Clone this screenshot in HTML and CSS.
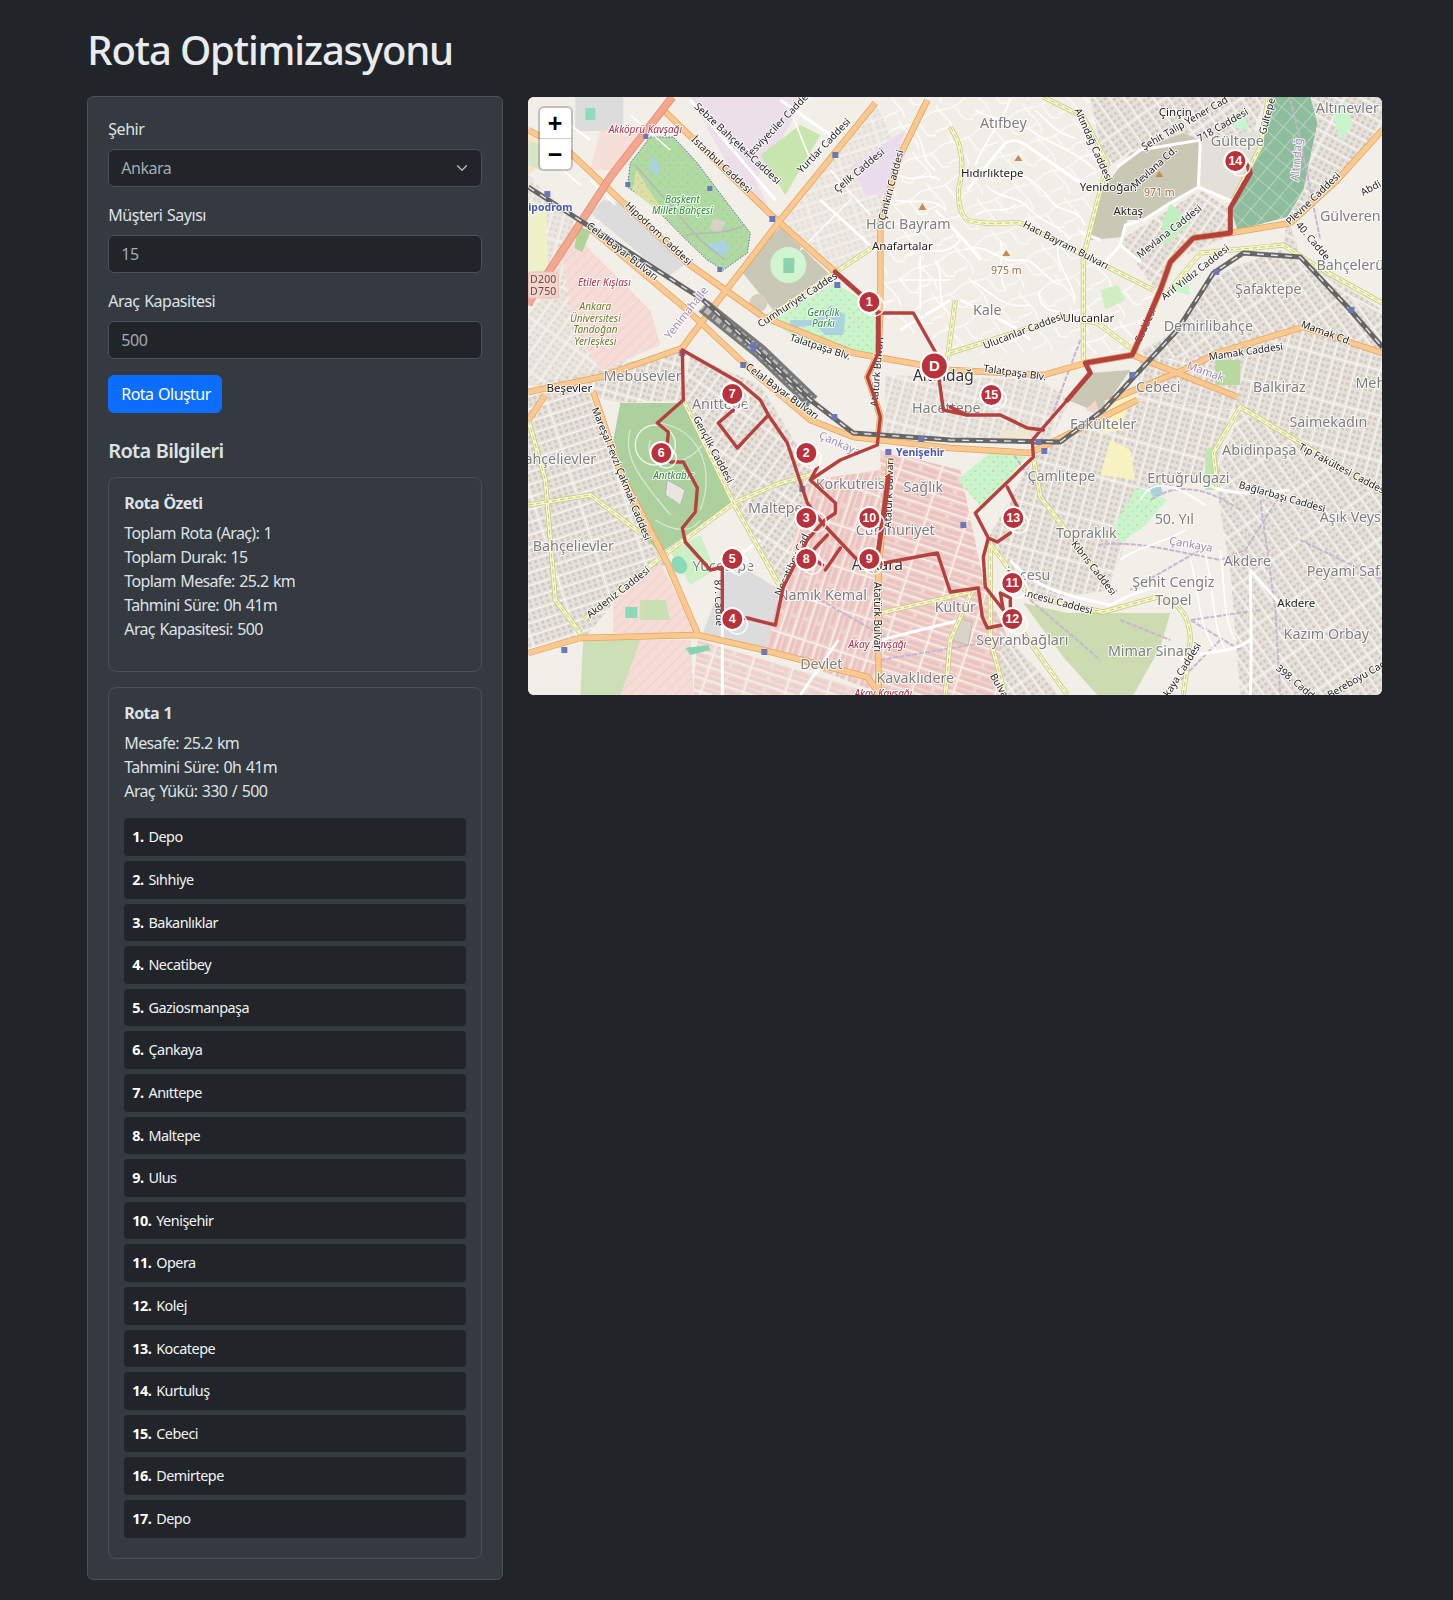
FILE: index.html
```html
<!DOCTYPE html>
<html lang="tr">
<head>
<meta charset="utf-8">
<title>Rota Optimizasyonu</title>
<link rel="stylesheet" href="styles.css">
</head>
<body>
<div class="page">
  <h1 class="title">Rota Optimizasyonu</h1>
  <div class="columns">
    <aside class="panel">
      <div class="field">
        <label class="field-label">Şehir</label>
        <div class="select-wrap">
          <select class="control"><option>Ankara</option></select>
          <svg class="chevron" viewBox="0 0 16 16"><path d="M2 5l6 6 6-6" fill="none" stroke="#adb5bd" stroke-width="2" stroke-linecap="round" stroke-linejoin="round"/></svg>
        </div>
      </div>
      <div class="field">
        <label class="field-label">Müşteri Sayısı</label>
        <input class="control" value="15">
      </div>
      <div class="field">
        <label class="field-label">Araç Kapasitesi</label>
        <input class="control" value="500">
      </div>
      <button class="btn">Rota Oluştur</button>
      <h4 class="section-title">Rota Bilgileri</h4>
      <section class="info-card">
        <h6 class="info-title">Rota Özeti</h6>
        <p class="info-lines">Toplam Rota (Araç): 1<br>Toplam Durak: 15<br>Toplam Mesafe: 25.2 km<br>Tahmini Süre: 0h 41m<br>Araç Kapasitesi: 500</p>
      </section>
      <section class="info-card">
        <h6 class="info-title">Rota 1</h6>
        <p class="info-lines">Mesafe: 25.2 km<br>Tahmini Süre: 0h 41m<br>Araç Yükü: 330 / 500</p>
        <ul class="stops">
          <li class="stop"><b>1.</b> Depo</li>
          <li class="stop"><b>2.</b> Sıhhiye</li>
          <li class="stop"><b>3.</b> Bakanlıklar</li>
          <li class="stop"><b>4.</b> Necatibey</li>
          <li class="stop"><b>5.</b> Gaziosmanpaşa</li>
          <li class="stop"><b>6.</b> Çankaya</li>
          <li class="stop"><b>7.</b> Anıttepe</li>
          <li class="stop"><b>8.</b> Maltepe</li>
          <li class="stop"><b>9.</b> Ulus</li>
          <li class="stop"><b>10.</b> Yenişehir</li>
          <li class="stop"><b>11.</b> Opera</li>
          <li class="stop"><b>12.</b> Kolej</li>
          <li class="stop"><b>13.</b> Kocatepe</li>
          <li class="stop"><b>14.</b> Kurtuluş</li>
          <li class="stop"><b>15.</b> Cebeci</li>
          <li class="stop"><b>16.</b> Demirtepe</li>
          <li class="stop"><b>17.</b> Depo</li>
        </ul>
      </section>
    </aside>
    <div class="map">
      <svg class="map-svg" viewBox="527.67 97 854.33 598" xmlns="http://www.w3.org/2000/svg">
        <defs>
          <pattern id="cityA" width="12" height="44" patternUnits="userSpaceOnUse" patternTransform="rotate(72)">
            <rect width="12" height="44" fill="#e6e1da"/>
            <path d="M2 3h3v3h-3zM7 3h3v3h-3zM2 9h3v3h-3zM7 9h3v3h-3zM2 15h3v3h-3zM7 15h3v3h-3zM2 21h3v3h-3zM7 21h3v3h-3zM2 27h3v3h-3zM7 27h3v3h-3zM2 33h3v3h-3zM7 33h3v3h-3zM2 39h3v3h-3zM7 39h3v3h-3z" fill="#d2cbc2"/>
            <path d="M0 0V44M0 0H12" stroke="#fff" stroke-width="1.6"/>
          </pattern>
          <pattern id="cityB" href="#cityA" patternTransform="rotate(35)"/>
          <pattern id="cityC" href="#cityA" patternTransform="rotate(-35)"/>
          <pattern id="cityD" href="#cityA" patternTransform="rotate(15)"/>
          <pattern id="cityE" href="#cityA" patternTransform="rotate(-62)"/>
          <pattern id="pinkA" width="13" height="40" patternUnits="userSpaceOnUse" patternTransform="rotate(18)">
            <rect width="13" height="40" fill="#efd6d0"/>
            <path d="M2 2h3v36h-3zM7 2h4v16h-4zM7 22h4v16h-4z" fill="#ecc4bf"/>
            <path d="M0 0V40M0 0H13" stroke="#fdf9f4" stroke-width="1.8"/>
          </pattern>
          <pattern id="pinkB" href="#pinkA" patternTransform="rotate(-72)"/>
          <pattern id="lightStreets" width="40" height="34" patternUnits="userSpaceOnUse" patternTransform="rotate(-24)">
            <rect width="40" height="34" fill="#f1eee7"/>
            <path d="M0 6C8 2 22 14 40 6M12 0C10 10 22 20 18 34M28 10C34 18 26 26 40 28M0 26C6 22 10 28 16 24" stroke="#fff" stroke-width="1.3" fill="none"/>
          </pattern>
          <pattern id="parkGrid" width="14" height="14" patternUnits="userSpaceOnUse" patternTransform="rotate(40)">
            <rect width="14" height="14" fill="#8dbd9d"/>
            <path d="M0 0V14M0 0H14" stroke="#d5e8da" stroke-width="1.1"/>
          </pattern>
          <pattern id="milHatch" width="8" height="8" patternUnits="userSpaceOnUse" patternTransform="rotate(-45)">
            <rect width="8" height="8" fill="#f6dcd6"/>
            <path d="M0 0H8" stroke="#efc4bb" stroke-width="1"/>
          </pattern>
          <pattern id="treeDots" width="9" height="9" patternUnits="userSpaceOnUse">
            <circle cx="3" cy="3" r=".7" fill="#e8948a"/>
            <circle cx="7.5" cy="7" r=".6" fill="#e8948a"/>
          </pattern>

          <g id="roadsOrange">
            <path d="M660 107L773 217L835 272"/>
            <path d="M875 103L780 220L690 337L682 348L600 377L528 392"/>
            <path d="M528 130L570 153L687 263L763 317L853 353L950 370L1043 375L1085 363"/>
            <path d="M588 227L687 310L753 372L810 420L853 437L950 448L1030 453L1137 400"/>
            <path d="M1085 363L1132 355L1237 397"/>
            <path d="M1110 400L1183 370L1217 353L1303 327L1382 353"/>
            <path d="M1193 238L1230 233L1290 223L1337 180L1382 130"/>
            <path d="M528 653L580 638L697 635L763 650L867 677L880 695"/>
            <path d="M593 392L620 473L667 563L697 633"/>
            <path d="M890 457L878 567L878 695"/>
            <path d="M927 100L900 155L880 223L880 313L878 353L867 377L875 400L880 417L877 443"/>
            <path d="M1132 355L1160 290L1170 262L1193 238"/>
            <path d="M528 420L545 395"/>
          </g>
          <g id="roadsYellow">
            <path d="M583 620L657 560L733 503L780 483L810 475"/>
            <path d="M763 320L873 247"/>
            <path d="M683 400L733 503L780 587"/>
            <path d="M950 127C962 145 965 165 958 190C958 205 960 215 967 220C985 226 1005 222 1020 223L1153 290"/>
            <path d="M1043 97L1083 117L1107 163L1083 257L1083 360"/>
            <path d="M950 353L1063 317L1097 323L1133 350"/>
            <path d="M1167 293L1200 253L1283 245L1317 267L1382 303"/>
            <path d="M1268 97L1260 147L1233 200"/>
            <path d="M1033 457L1040 497L1083 553L1110 590"/>
            <path d="M987 540L1030 597L1103 612L1157 597C1180 600 1190 620 1190 640L1183 695"/>
            <path d="M1217 487L1213 453L1240 407L1300 443L1382 493"/>
            <path d="M1023 633L1067 695"/>
            <path d="M990 540L990 640L1005 695"/>
            <path d="M528 505L590 495L640 533"/>
            <path d="M880 613L945 598L975 590"/>
            <path d="M528 420L545 480L555 600L585 640"/>
            <path d="M947 360L955 300"/>
            <path d="M945 695L950 640L972 590"/>
          </g>
          <g id="streetsWhite">
            <path d="M1117 167L1140 150L1200 140L1198 187L1233 202"/>
            <path d="M1198 187L1170 203L1143 220L1125 225L1120 245L1140 262"/>
            <path d="M967 190L1003 145C1010 138 1020 140 1030 148L1090 190"/>
            <path d="M1100 240L1080 232M1120 245L1105 262"/>
            <path d="M1250 695C1252 640 1250 600 1250 570L1285 610"/>
            <path d="M1010 560C1030 585 1060 595 1110 605L1130 595L1160 585"/>
            <path d="M722 567L760 540M722 620V695"/>
            <path d="M900 330C915 320 935 310 950 300M935 210C950 225 965 240 980 260"/>
            <path d="M960 300C990 315 1015 325 1030 340"/>
            <path d="M1200 480C1220 495 1250 495 1290 490"/>
            <path d="M820 200L875 250M780 100L830 135M690 100L775 200"/>
            <path d="M880 640L960 620M838 640L800 695M1180 660C1200 650 1230 655 1250 640"/>
          </g>
          <g id="streetsThin">
            <path d="M1010 100C1000 125 985 140 975 165M975 110C990 120 1010 118 1030 130C1050 145 1075 150 1095 170"/>
            <path d="M1035 110C1050 125 1060 135 1075 138M1000 175C1020 170 1035 180 1050 200C1060 215 1075 205 1085 225"/>
            <path d="M985 185C1000 200 1020 195 1030 210C1045 225 1060 225 1070 240M975 215C990 205 1005 215 1015 205"/>
            <path d="M965 250C985 240 1000 265 1020 260C1035 258 1045 280 1060 285M970 280C990 290 1000 310 1030 305"/>
            <path d="M1060 240C1050 260 1070 275 1075 300M1040 290C1035 305 1050 312 1060 312M1000 240C1005 255 995 270 1005 290"/>
            <path d="M905 255C925 245 945 260 960 240M900 280H950M920 255V310M935 260C945 275 935 295 945 310"/>
            <path d="M900 175C915 185 925 170 940 180M895 200C915 205 930 195 945 210M915 130C925 145 920 160 935 170"/>
            <path d="M1190 560C1200 590 1195 620 1215 650M1205 555C1215 590 1210 620 1225 650M1220 550C1225 585 1222 620 1235 640"/>
            <path d="M1140 500C1155 470 1190 495 1205 505M1120 560C1140 545 1160 545 1185 530"/>
            <path d="M630 115L670 150M550 110L590 140M540 150L580 185M590 180L615 205"/>
            <path d="M790 110L810 160M830 170L870 215M850 200L800 250"/>
          </g>
          <g id="rail">
            <path d="M528 187L703 300L810 400L853 433L950 440L1060 442L1103 410L1177 330L1213 273L1243 253L1300 257L1350 310L1382 347"/>
          </g>
          <path id="yard" d="M703 306L760 352L812 402"/>
          <path id="routePath" d="M878 313H913L935 352M878 353L867 377L875 400L880 417L877 445L840 460L810 480L835 503V513L822 522M810 480L817 467M682 350L740 383L731 395M740 383L760 400L768 415L737 448L718 423L733 410M768 415L787 443L807 503L822 523L855 558L869 559M682 350L683 400L657 423L668 432L667 443M670 462H683L697 488L695 512L682 528L685 542L710 570L722 567V613M732 619L747 618L775 625L783 587L807 540L822 523M813 550L827 535M825 570L840 548M812 558L822 565M873 565L937 553L950 592L978 588L982 617L987 628L1002 625M1000 593L1010 598V607M1000 593L1003 610L985 587L983 557L988 538L975 513L1033 457L1032 440L1067 400M988 538L997 542L1010 533M1007 487L1017 507M935 352L943 410L967 415H1000L1027 428L1043 430M950 407L967 415"/>
          <path id="routeThick" d="M835 272L869 302L878 313V353M1067 400L1090 373L1085 363L1132 355L1160 290L1170 262L1193 238L1230 233V208L1250 173L1248 166M888 477L883 517L877 557"/>
        </defs>

        <g class="map-base">
          <rect x="527" y="96" width="856" height="600" fill="#f2efe9"/>
          <!-- urban texture -->
          <path fill="url(#cityA)" d="M528 395L590 390L620 470L665 565L613 603L583 640L528 655Z"/>
          <path fill="url(#cityD)" d="M528 385L682 350L683 400L620 403L590 395Z"/>
          <path fill="url(#cityB)" d="M690 355L760 385L830 500L780 585L733 503L683 400Z"/>
          <path fill="url(#pinkA)" d="M780 587L810 480L880 470L880 693L765 650Z"/>
          <path fill="url(#pinkB)" d="M880 450L960 470L985 590L1000 620L1030 695L880 695Z"/>
          <path fill="url(#cityD)" d="M1033 457L1130 400L1230 410L1217 480L1140 490L1110 590L1040 600L987 540Z"/>
          <path fill="url(#cityC)" d="M1240 410L1382 490V695H1240L1230 570L1215 480Z"/>
          <path fill="url(#cityC)" d="M1133 355L1177 330L1213 275L1280 250L1382 320V350L1300 330L1217 355L1180 370Z"/>
          <path fill="url(#cityD)" d="M1140 360L1217 355L1300 330L1382 355V490L1240 410L1137 400Z"/>
          <path fill="url(#cityE)" d="M1310 97H1382V130L1290 225L1300 257L1382 310V320L1283 245L1287 217L1317 123Z"/>
          <path fill="url(#lightStreets)" d="M880 100L950 97L960 200L970 300L950 355L880 313Z"/>
          <path fill="url(#lightStreets)" d="M950 97H1090L1105 170L1085 260L1083 350L950 355Z" opacity=".8"/>
          <path fill="url(#cityC)" d="M1090 97H1265L1240 170L1200 140L1130 150L1105 170Z"/>
          <path fill="url(#cityB)" d="M1120 240L1200 190L1230 210V235L1170 262L1155 290Z"/>
          <path fill="url(#lightStreets)" d="M1083 260L1155 290L1135 350L1083 355Z"/>
          <path fill="url(#pinkB)" d="M697 640L880 695H693Z" opacity=".7"/>
          <path fill="url(#cityC)" d="M1000 630L1060 695H1000Z"/>
          <path fill="url(#cityD)" d="M885 375L1040 380L1070 400L1050 440L885 440Z" opacity=".75"/>
          <path fill="#dcdcdc" d="M730 560L780 590L765 650L700 640L715 600Z"/>
          <path fill="url(#cityB)" d="M528 310L590 262L660 340L600 377L528 385Z" opacity=".6"/>
          <path fill="url(#cityA)" d="M780 220L835 272L875 250L900 155L875 103Z" opacity=".45"/>
          <path fill="url(#cityD)" d="M528 175L590 235L560 290L528 300Z" opacity=".6"/>
          <!-- landuse -->
          <rect x="575" y="97" width="48" height="34" fill="#dcdcdc"/>
          <path fill="#f6dfd8" d="M600 130L640 130L615 170L590 170Z"/>
          <path fill="#ecdfe9" d="M690 97H800L790 125L755 180L773 217L730 170Z"/>
          <path fill="#eadced" d="M852 165L905 130L885 195L865 195Z"/>
          <path fill="#c9e5ae" d="M760 155L800 125L820 135L785 195Z"/>
          <path fill="#c9c8b6" d="M780 227L828 273L777 315L740 270Z"/>
          <circle cx="788" cy="265" r="18" fill="#d0f5d0"/>
          <rect x="783" y="258" width="11" height="15" fill="#8ad3af"/>
          <circle cx="758" cy="303" r="9" fill="#d5cdbd"/>
          <path fill="#addba2" d="M650 137L673 137L697 163L727 203L750 233L747 253L723 270L707 260L683 237L650 203L627 187L630 163Z" stroke="#5566aa" stroke-width="1" stroke-dasharray="1.5 1.5"/>
          <path fill="#dbe0a6" d="M636 170L665 215L650 205L632 190Z"/>
          <path fill="url(#treeDots)" d="M650 137L673 137L697 163L727 203L750 233L747 253L723 270L707 260L683 237L650 203L627 187L630 163Z"/>
          <path fill="#aad3df" d="M650 155L660 165L659 176L650 170Z"/>
          <path fill="#aad3df" d="M705 245L725 240L730 250L720 258Z"/>
          <path fill="#d9d0c9" d="M713 218L725 222L720 234L709 228Z"/>
          <path fill="none" stroke="#b5b8b5" stroke-width="1.6" d="M635 165L700 240L725 260M685 235C705 232 725 235 745 225"/>
          <path fill="#c8f5ca" d="M835 283L877 310V357L857 353L793 337L770 320Z"/>
          <path fill="url(#treeDots)" d="M835 283L877 310V357L857 353L793 337L770 320Z"/>
          <path fill="#aad3df" d="M790 320H815L830 305L845 315L843 335L825 335L815 325L790 328Z"/>
          <path fill="#dcdcdc" d="M590 213L603 200L630 205L687 263L667 277Z"/>
          <path fill="url(#milHatch)" d="M560 250L580 240L650 310L660 345L600 370L575 330Z"/>
          <path fill="#eef2c9" d="M528 200L546 210L548 270L528 272Z"/>
          <path fill="#f9e4c7" d="M528 125L548 160L528 175Z"/>
          <path fill="#d6e6c4" d="M528 140L545 148L540 170L528 165Z"/>
          <path fill="#8fdcbb" d="M585 108H595V120H585Z"/>
          <path fill="#b1d39a" d="M578 225L590 232L582 252L574 248Z"/>
          <path fill="#add19e" d="M620 403H683L733 503L660 553L640 533L613 440Z"/>
          <path fill="#e8e6df" d="M667 480L685 490L680 505L665 495Z" stroke="#b0b8b0"/>
          <path fill="none" stroke="#dfe8d8" stroke-width="1.2" d="M630 430C620 460 650 490 670 515M660 423C700 430 715 470 700 510M650 440C640 470 690 470 705 440M655 520C670 530 690 535 700 520"/>
          <circle cx="655" cy="445" r="20" fill="none" stroke="#f2f2ec" stroke-width="1.4"/>
          <path fill="#cdf0c6" d="M670 552L700 535L715 570L690 585Z"/>
          <rect x="672" y="556" width="14" height="18" rx="7" transform="rotate(-30 679 565)" fill="#8ad9b8"/>
          <path fill="url(#milHatch)" d="M613 603L660 563L697 633L613 633Z"/>
          <path fill="#c9e0b5" d="M640 600L665 600L670 620L640 620Z"/>
          <path fill="#8ad9b8" d="M625 607H637V618H625Z"/>
          <path fill="#ccdfb6" d="M583 640H690L693 695H580Z"/>
          <path fill="url(#milHatch)" d="M640 640H690L693 695H620Z"/>
          <path fill="#8ad3af" d="M685 648L708 645L710 650L690 655Z"/>
          <path fill="#c8c8b4" d="M1067 400L1090 373L1130 370L1100 413Z"/>
          <path fill="#c8f5ca" d="M957 480L993 450L1025 457L983 510Z"/>
          <path fill="url(#treeDots)" d="M957 480L993 450L1025 457L983 510Z"/>
          <path fill="#c8f5ca" d="M1113 527L1137 487L1167 500L1143 527L1120 543Z"/>
          <path fill="url(#treeDots)" d="M1113 527L1137 487L1167 500L1143 527L1120 543Z"/>
          <path fill="#aad3df" d="M1148 487L1160 485L1163 495L1153 497Z"/>
          <path fill="#ccdcb0" d="M1023 603L1067 613H1170L1160 647L1133 695H1097L1063 657Z"/>
          <path fill="#c8c8b4" d="M1183 133L1200 140L1198 187L1170 203L1143 220L1127 220L1123 237L1090 240L1100 193L1130 153Z"/>
          <path fill="#c0f0c0" d="M1170 203L1190 223L1163 247L1162 223Z"/>
          <path fill="url(#parkGrid)" d="M1267 97H1310L1317 123L1303 190L1287 217L1237 230L1230 207L1257 157Z"/>
          <path fill="#e3e0da" d="M1200 140L1262 130L1255 160L1233 200L1200 187Z"/>
          <path fill="#bfe6b0" d="M1205 450L1215 445L1220 490H1205Z"/>
          <path fill="#c8f5ca" d="M1230 115L1245 110L1248 130L1235 128Z"/>
          <path fill="#c8f5ca" d="M1333 115L1345 100L1352 125L1340 140Z"/>
          <path fill="#c8f5ca" d="M1170 290L1185 275L1190 295Z"/>
          <path fill="#b7d9a0" d="M1215 360H1240V385H1215Z"/>
          <path fill="#d1edc4" d="M1100 290L1118 285L1125 300L1105 310Z"/>
          <path fill="#f7f2c0" d="M1105 400L1132 395L1120 430L1100 435Z"/>
          <path fill="#f7f2c0" d="M1110 440L1130 450L1135 480L1100 475Z"/>
          <path fill="#f0e7d0" d="M1000 430L1030 430L1030 440H1000Z"/>
          <path fill="#f6d2c8" d="M1085 410L1095 400L1100 415Z"/>
          <path fill="#d9d3c9" d="M958 618L972 622L968 645L950 640Z" stroke="#c2b8aa"/>
          <!-- footways (purple) -->
          <path class="track" d="M1098 545C1130 540 1170 550 1220 560L1245 550L1280 495M1200 550L1130 590M1150 500C1180 480 1210 490 1240 510M1120 620L1170 640M1260 610L1190 620L1240 650M1260 500L1275 610L1280 695M1300 540L1382 580M1030 600L1100 660M1010 450L1045 500M1220 640L1180 680"/>
          <path class="track" d="M880 660L1000 640M820 600L890 640M1290 100L1300 140L1320 240M1080 340L1050 420"/>

          <use href="#streetsThin" class="r-thin"/>
          <use href="#streetsWhite" class="r-white"/>
          <use href="#roadsYellow" class="r-yellow-case"/>
          <use href="#roadsYellow" class="r-yellow"/>
          <use href="#roadsYellow" class="r-yellow-dash"/>
          <use href="#roadsOrange" class="r-orange-case"/>
          <use href="#roadsOrange" class="r-orange"/>
          <path class="r-trunk-case" d="M672 97L610 177L530 300L528 305"/>
          <path class="r-trunk" d="M672 97L610 177L530 300L528 305"/>
          <use href="#yard" class="r-yard"/>
          <use href="#yard" class="r-yard-dash"/>
          <use href="#rail" class="r-rail"/>
          <use href="#rail" class="r-rail-dash"/>

          <g class="sq">
            <rect x="832" y="152" width="6" height="6"/><rect x="769" y="216" width="6" height="6"/><rect x="834" y="282" width="6" height="6"/><rect x="740" y="362" width="6" height="6"/><rect x="750" y="342" width="6" height="10"/><rect x="679" y="350" width="6" height="6"/><rect x="544" y="191" width="6" height="6"/><rect x="1213" y="269" width="6" height="6"/><rect x="1348" y="307" width="6" height="6"/><rect x="1129" y="372" width="6" height="6"/><rect x="831" y="414" width="6" height="6"/><rect x="918" y="436" width="6" height="6"/><rect x="885" y="449" width="6" height="6"/><rect x="799" y="486" width="6" height="6"/><rect x="761" y="649" width="6" height="6"/><rect x="561" y="647" width="6" height="6"/><rect x="1035" y="439" width="6" height="6"/><rect x="1041" y="448" width="6" height="6"/><rect x="960" y="522" width="6" height="6"/><rect x="643" y="134" width="5" height="5"/><rect x="625" y="182" width="5" height="5"/><rect x="707" y="186" width="5" height="5"/><rect x="717" y="267" width="5" height="5"/>
          </g>
          <g class="peak">
            <path d="M1159 171l4 6h-8zM1006 250l4 6h-8zM1018 155l4 6h-8zM922 203l4 7h-8z"/>
          </g>

          <!-- shield -->
          <rect class="shield" x="528" y="272" width="30" height="26" rx="2"/>
          <text class="t-shield" x="543" y="283">D200</text>
          <text class="t-shield" x="543" y="295">D750</text>

          <!-- place labels -->
          <g class="t-place">
            <text x="908" y="229">Hacı Bayram</text><text x="644" y="381">Mebusevleri</text><text x="1003" y="128">Atıfbey</text><text x="1347" y="113">Altınevler</text><text x="1237" y="146">Gültepe</text><text x="987" y="315">Kale</text><text x="1208" y="331">Demirlibahçe</text><text x="1268" y="294">Şafaktepe</text><text x="1350" y="221">Gülveren</text><text x="1350" y="270">Bahçelerü</text><text x="1158" y="392">Cebeci</text><text x="1279" y="392">Balkiraz</text><text x="1370" y="388">Meh</text><text x="1328" y="427">Saimekadın</text><text x="1103" y="429">Fakülteler</text><text x="1259" y="455">Abidinpaşa</text><text x="1188" y="483">Ertuğrulgazi</text><text x="1061" y="481">Çamlıtepe</text><text x="1086" y="538">Topraklık</text><text x="1174" y="524">50. Yıl</text><text x="1350" y="522">Aşık Veys</text><text x="1173" y="587">Şehit Cengiz</text><text x="1173" y="605">Topel</text><text x="1247" y="566">Akdere</text><text x="1343" y="576">Peyami Saf</text><text x="1326" y="639">Kazım Orbay</text><text x="1022" y="645">Seyranbağları</text><text x="1150" y="656">Mimar Sinan</text><text x="1028" y="580">İncesu</text><text x="955" y="612">Kültür</text><text x="915" y="683">Kavaklıdere</text><text x="821" y="669">Devlet</text><text x="822" y="600">Namık Kemal</text><text x="775" y="513">Maltepe</text><text x="850" y="489">Korkutreis</text><text x="923" y="492">Sağlık</text><text x="895" y="535">Cumhuriyet</text><text x="723" y="571">Yücetepe</text><text x="573" y="551">Bahçelievler</text><text x="560" y="464">ahçelievler</text><text x="720" y="409">Anıttepe</text><text x="946" y="413">Hacettepe</text>
          </g>
          <g class="t-place-dark">
            <text x="902" y="250">Anafartalar</text><text x="569" y="392">Beşevler</text><text x="1175" y="116">Çinçin</text><text x="992" y="177">Hıdırlıktepe</text><text x="1108" y="191">Yenidoğan</text><text x="1128" y="215">Aktaş</text><text x="1088" y="322">Ulucanlar</text><text x="1296" y="607">Akdere</text>
          </g>
          <text class="t-city" x="943" y="381">Altındağ</text>
          <text class="t-city" x="877" y="570">Ankara</text>
          <text class="t-blue" x="920" y="456">Yenişehir</text>
          <text class="t-blue" x="546" y="211">Hipodrom</text>
          <g class="t-red">
            <text x="645" y="133">Akköprü Kavşağı</text><text x="877" y="648">Akay Kavşağı</text><text x="883" y="697">Akay Kavşağı</text><text x="604" y="286">Etiler Kışlası</text>
          </g>
          <g class="t-park">
            <text x="682" y="203">Başkent</text><text x="682" y="214">Millet Bahçesi</text><text x="823" y="316">Gençlik</text><text x="823" y="327">Parkı</text><text x="673" y="479">Anıtkabir</text>
          </g>
          <g class="t-olive">
            <text x="595" y="310">Ankara</text><text x="595" y="322">Üniversitesi</text><text x="595" y="333">Tandoğan</text><text x="595" y="345">Yerleşkesi</text>
          </g>
          <g class="t-elev">
            <text x="1159" y="196">971 m</text><text x="1006" y="274">975 m</text>
          </g>
          <!-- road labels -->
          <g class="t-road">
            <text transform="translate(735 146) rotate(43)">Sebze Bahçeleri Caddesi</text>
            <text transform="translate(719 167) rotate(43)">İstanbul Caddesi</text>
            <text transform="translate(781 126) rotate(-46)">Tesviyeciler Caddesi</text>
            <text transform="translate(826 148) rotate(-46)">Yurtlar Caddesi</text>
            <text transform="translate(861 173) rotate(-40)">Çelik Caddesi</text>
            <text transform="translate(894 186) rotate(-75)">Çankırı Caddesi</text>
            <text transform="translate(656 236) rotate(43)">Hipodrom Caddesi</text>
            <text transform="translate(620 254) rotate(38)">Celal Bayar Bulvarı</text>
            <text transform="translate(800 302) rotate(-33)">Cumhuriyet Caddesi</text>
            <text transform="translate(819 350) rotate(18)">Talatpaşa Blv.</text>
            <text transform="translate(780 394) rotate(36)">Celal Bayar Bulvarı</text>
            <text transform="translate(1024 334) rotate(-21)">Ulucanlar Caddesi</text>
            <text transform="translate(1014 376) rotate(8)">Talatpaşa Blv.</text>
            <text transform="translate(1064 248) rotate(27)">Hacı Bayram Bulvarı</text>
            <text transform="translate(1090 146) rotate(66)">Altındağ Caddesi</text>
            <text transform="translate(1186 126) rotate(-30)">Şehit Talip Yener Cad</text>
            <text transform="translate(1224 128) rotate(-30)">718 Caddesi</text>
            <text transform="translate(1156 170) rotate(-42)">Mevlana Cd.</text>
            <text transform="translate(1171 234) rotate(-38)">Mevlana Caddesi</text>
            <text transform="translate(1197 275) rotate(-38)">Arif Yıldız Caddesi</text>
            <text transform="translate(1315 201) rotate(-44)">Plevne Caddesi</text>
            <text transform="translate(1270 117) rotate(-75)">Gültepe</text>
            <text transform="translate(1310 243) rotate(50)">40. Cadde</text>
            <text transform="translate(1372 191) rotate(-28)">Abdi</text>
            <text transform="translate(1246 355) rotate(-8)">Mamak Caddesi</text>
            <text transform="translate(1325 336) rotate(20)">Mamak Cd.</text>
            <text transform="translate(1148 327) rotate(-65)">Caddesi</text>
            <text transform="translate(618 475) rotate(68)">Mareşal Fevzi Çakmak Caddesi</text>
            <text transform="translate(710 451) rotate(62)">Gençlik Caddesi</text>
            <text transform="translate(620 595) rotate(-38)">Akdeniz Caddesi</text>
            <text transform="translate(715 603) rotate(88)">87. Cadde</text>
            <text transform="translate(795 565) rotate(-65)">Necatibey Cad.</text>
            <text transform="translate(874 617) rotate(90)">Atatürk Bulvarı</text>
            <text transform="translate(892 493) rotate(-88)">Atatürk Bulvarı</text>
            <text transform="translate(880 372) rotate(-85)">Atatürk Bulvarı</text>
            <text transform="translate(1091 570) rotate(52)">Kıbrıs Caddesi</text>
            <text transform="translate(1057 605) rotate(15)">İncesu Caddesi</text>
            <text transform="translate(1281 500) rotate(16)">Bağlarbaşı Caddesi</text>
            <text transform="translate(1341 472) rotate(28)">Tıp Fakültesi Caddesi</text>
            <text transform="translate(1295 686) rotate(40)">398. Cadde</text>
            <text transform="translate(1358 682) rotate(-30)">Bereboyu Cad</text>
            <text transform="translate(1180 679) rotate(-58)">Çankaya Caddesi</text>
            <text transform="translate(997 689) rotate(60)">Bulvar</text>
          </g>
          <g class="t-purple">
            <text transform="translate(689 315) rotate(-52)">Yenimahalle</text>
            <text transform="translate(1300 160) rotate(-85)">Altındağ</text>
            <text transform="translate(1204 375) rotate(20)">Mamak</text>
            <text transform="translate(838 447) rotate(24)">Çankaya</text>
            <text transform="translate(1190 548) rotate(10)">Çankaya</text>
          </g>
        </g>

        <!-- route -->
        <use href="#routePath" class="route"/>
        <use href="#routeThick" class="route route-thick"/>

        <!-- marker halos -->
        <g class="halo">
          <circle cx="874" cy="306" r="10"/><circle cx="811" cy="458" r="10"/><circle cx="816" cy="522" r="10"/><circle cx="737" cy="624" r="10"/><circle cx="738" cy="564" r="10"/><circle cx="666" cy="458" r="10"/><circle cx="738" cy="399" r="10"/><circle cx="812" cy="564" r="10"/><circle cx="873" cy="564" r="10"/><circle cx="874" cy="523" r="10"/><circle cx="1017" cy="588" r="10"/><circle cx="1017" cy="624" r="10"/><circle cx="1018" cy="523" r="10"/><circle cx="1240" cy="166" r="10"/><circle cx="996" cy="399" r="10"/>
        </g>
        <!-- markers -->
        <g class="marker">
          <circle cx="934" cy="366" r="13.5"/>
          <circle cx="869" cy="302" r="11"/><circle cx="806" cy="453" r="11"/><circle cx="806" cy="518" r="11"/><circle cx="732" cy="619" r="11"/><circle cx="732" cy="559" r="11"/><circle cx="661" cy="453" r="11"/><circle cx="732" cy="394" r="11"/><circle cx="806" cy="559" r="11"/><circle cx="869" cy="559" r="11"/><circle cx="869" cy="518" r="11"/><circle cx="1012" cy="583" r="11"/><circle cx="1012" cy="619" r="11"/><circle cx="1013" cy="518" r="11"/><circle cx="1235" cy="161" r="11"/><circle cx="991" cy="395" r="11"/>
        </g>
        <g class="marker-text">
          <text class="marker-d" x="934" y="371">D</text>
          <text x="869" y="306">1</text><text x="806" y="457">2</text><text x="806" y="522">3</text><text x="732" y="623">4</text><text x="732" y="563">5</text><text x="661" y="457">6</text><text x="732" y="398">7</text><text x="806" y="563">8</text><text x="869" y="563">9</text><text x="869" y="522">10</text><text x="1012" y="587">11</text><text x="1012" y="623">12</text><text x="1013" y="522">13</text><text x="1235" y="165">14</text><text x="991" y="399">15</text>
        </g>
      </svg>
      <div class="zoom-control">
        <a class="zoom-btn zoom-in">+</a>
        <a class="zoom-btn">−</a>
      </div>
    </div>
  </div>
</div>
</body>
</html>
```
FILE: styles.css
```css
* { box-sizing: border-box; }
html, body { margin: 0; padding: 0; }
body {
  background: #212529;
  color: #dee2e6;
  font-family: "Noto Sans", "Open Sans", sans-serif;
  font-size: 16px;
  line-height: 24px;
}
.page { width: 1294.67px; margin-left: 87.33px; padding-top: 26px; padding-bottom: 20px; }
.title {
  margin: 0 0 22px;
  font-size: 40px;
  line-height: 48px;
  font-weight: 500;
  letter-spacing: -1.15px;
  color: #e9ecef;
}
.columns { display: grid; grid-template-columns: 415.33px 854.33px; column-gap: 25px; align-items: start; }
.panel {
  background: #343a40;
  border: 1px solid #495057;
  border-radius: 6px;
  padding: 20px;
}
.field { margin-bottom: 16px; }
.field-label { display: block; margin-bottom: 8px; letter-spacing: -0.5px; word-spacing: 1px; }
.select-wrap { position: relative; }
.control {
  display: block;
  width: 100%;
  height: 38px;
  padding: 6px 12px;
  background: #212529;
  border: 1px solid #495057;
  border-radius: 6px;
  color: #a3abb3;
  font: inherit;
  letter-spacing: -0.5px;
  appearance: none;
  outline: none;
}
.chevron { position: absolute; right: 14px; top: 13px; width: 12px; height: 12px; }
.btn {
  display: block;
  height: 38px;
  padding: 6px 12px;
  background: #0d6efd;
  border: 1px solid #0d6efd;
  border-radius: 6px;
  color: #fff;
  font: inherit;
  letter-spacing: -0.55px;
  word-spacing: 1px;
  width: 114px;
  white-space: nowrap;
}
.section-title {
  margin: 26px 0 14px;
  font-size: 20px;
  line-height: 24px;
  font-weight: 600;
  letter-spacing: -0.75px;
  word-spacing: 1px;
}
.info-card {
  background: #343a40;
  border: 1px solid #495057;
  border-radius: 8px;
  padding: 16px 15px 15px;
  margin-bottom: 15px;
}
.info-card:last-child { margin-bottom: 0; }
.info-title {
  margin: 0 0 8px;
  font-size: 16px;
  line-height: 19.2px;
  font-weight: 700;
  letter-spacing: -0.6px;
  word-spacing: 1px;
}
.info-lines { margin: 0 0 15px; letter-spacing: -0.65px; word-spacing: 1px; }
.stops { list-style: none; margin: 0; padding: 0; }
.stop {
  background: #212529;
  border-radius: 4px;
  padding: 8px;
  margin-bottom: 5px;
  font-size: 14.4px;
  line-height: 21.6px;
  letter-spacing: -0.48px;
  word-spacing: 1.5px;
  color: #f1f3f5;
}
.stop b { font-weight: 700; color: #fff; }

/* map */
.map { position: relative; margin-top: 1px; height: 598px; border-radius: 6px; overflow: hidden; background: #f2efe9; }
.map-svg { display: block; width: 100%; height: 100%; }
.map-base { filter: blur(0.35px); }
.r-orange-case { fill: none; stroke: #e2a35f; stroke-width: 6.5; stroke-linejoin: round; }
.r-orange { fill: none; stroke: #fbc98f; stroke-width: 5; stroke-linejoin: round; }
.r-trunk-case { fill: none; stroke: #e2866c; stroke-width: 8; }
.r-trunk { fill: none; stroke: #f4a78f; stroke-width: 6.5; }
.r-yellow-case { fill: none; stroke: #c6c58c; stroke-width: 5; stroke-linejoin: round; }
.r-yellow { fill: none; stroke: #f7fabf; stroke-width: 3.6; stroke-linejoin: round; }
.r-yellow-dash { fill: none; stroke: #b9b49c; stroke-width: .8; stroke-dasharray: 5 3; }
.r-white { fill: none; stroke: #fff; stroke-width: 3; stroke-linejoin: round; }
.r-thin { fill: none; stroke: #fff; stroke-width: 1.6; stroke-linejoin: round; }
.r-rail { fill: none; stroke: #666; stroke-width: 5; stroke-linejoin: round; }
.r-rail-dash { fill: none; stroke: #e6e6e6; stroke-width: 1.4; stroke-dasharray: 7 7; }
.r-yard { fill: none; stroke: #7a7a7a; stroke-width: 15; }
.r-yard-dash { fill: none; stroke: #eee; stroke-width: 9; stroke-dasharray: 1.4 2.6 6 4; opacity: .55; }
.track { fill: none; stroke: #c6b7cf; stroke-width: 2; stroke-dasharray: 5 1.5; }
.sq { fill: #6b78b5; }
.peak { fill: #c98a4b; }
.shield { fill: #f3d5cf; stroke: #eac1b8; }

.map-svg text { font-family: "Noto Sans", "Open Sans", sans-serif; text-anchor: middle; paint-order: stroke; stroke: rgba(255,255,255,.85); stroke-width: 2px; stroke-linejoin: round; }
.map-svg .t-shield { font-size: 10.5px; fill: #6d4a45; stroke: none; letter-spacing: .2px; }
.t-place text { font-size: 14.3px; fill: #7d7d7d; }
.t-place-dark text { font-size: 11.5px; fill: #222; }
.t-city { font-size: 15.5px; fill: #333; }
.t-blue { font-size: 10.5px; font-weight: 700; fill: #4a59b0; }
.t-red text { font-size: 10px; font-style: italic; fill: #a4304a; }
.t-park text { font-size: 10px; font-style: italic; fill: #2c8a3a; }
.t-olive text { font-size: 10px; font-style: italic; fill: #6c7a2a; }
.t-elev text { font-size: 10.5px; fill: #9a6b45; }
.t-road text { font-size: 10px; fill: #222; }
.t-purple text { font-size: 11px; fill: #a288ad; }

.route { fill: none; stroke: #b5413f; stroke-width: 3.4; stroke-linejoin: round; stroke-linecap: round; }
.route-thick { stroke-width: 5; }
.halo { fill: none; stroke: rgba(255,255,255,.85); stroke-width: 1.5; }
.marker { fill: #b9313b; stroke: #fff; stroke-width: 2; }
.map-svg .marker-text text { font-family: "Liberation Sans", sans-serif; font-size: 12.5px; font-weight: 700; fill: #fff; stroke: none; text-anchor: middle; }
.map-svg .marker-text .marker-d { font-size: 15px; }

.zoom-control {
  position: absolute;
  left: 12px;
  top: 11px;
  width: 31px;
  background: #fff;
  border-radius: 4px;
  box-shadow: 0 0 0 2px rgba(0,0,0,.2);
  overflow: hidden;
}
.zoom-btn {
  display: block;
  height: 30px;
  line-height: 30px;
  text-align: center;
  font-family: "Liberation Sans", sans-serif;
  font-size: 25px;
  font-weight: 700;
  color: #000;
}
.zoom-in { height: 31px; border-bottom: 1px solid #ccc; }
```
